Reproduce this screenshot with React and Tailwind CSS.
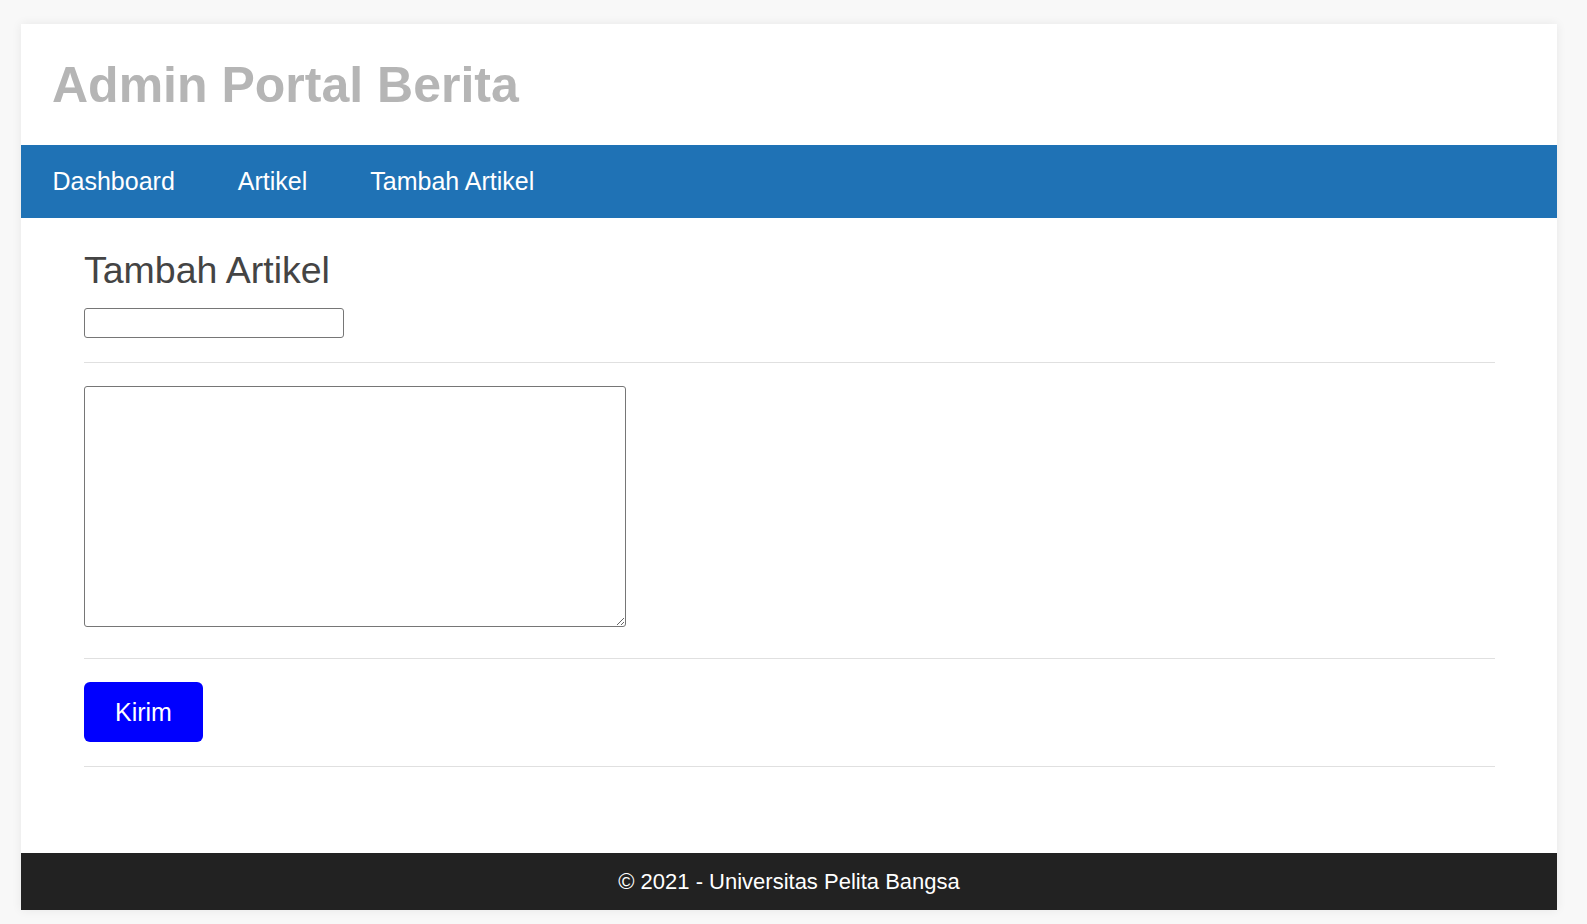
const App = () => {
  const links = ['Dashboard', 'Artikel', 'Tambah Artikel']

  return (
    <div className="min-h-screen bg-[#f8f8f8] pt-[24px] font-['Liberation_Sans',Arial,sans-serif]">
      <div className="ml-[21px] w-[1536px] bg-white shadow-[0_0_10px_rgba(0,0,0,0.07)]">
        <header className="h-[121px] pt-[33px] px-[31px]">
          <h1 className="text-[50px] leading-[57px] font-bold text-[#b5b5b5]">
            Admin Portal Berita
          </h1>
        </header>
        <nav className="h-[73px] flex items-center bg-[#1f72b5]">
          {links.map((item) => (
            <a key={item} href="#" className="px-[31.5px] text-[25px] text-white">
              {item}
            </a>
          ))}
        </nav>
        <main className="pt-[32px] pb-[86px] pl-[63px] pr-[62px]">
          <h2 className="text-[37.5px] leading-[41px] font-normal text-[#444]">
            Tambah Artikel
          </h2>
          <input
            type="text"
            className="mt-[17px] block w-[260px] h-[30px] border border-[#767676] rounded-[3px] bg-white"
          />
          <hr className="mt-[24px] border-0 h-px bg-[#e0e0e0]" />
          <textarea className="mt-[23px] block w-[542px] h-[241px] border border-[#767676] rounded-[3px] bg-white" />
          <hr className="mt-[31px] border-0 h-px bg-[#e0e0e0]" />
          <button className="mt-[23px] block px-[31px] py-[16px] bg-[#0000ff] rounded-[6px] text-[25px] leading-[28px] text-white">
            Kirim
          </button>
          <hr className="mt-[24px] border-0 h-px bg-[#e0e0e0]" />
        </main>
        <footer className="h-[57px] flex items-center justify-center bg-[#222]">
          <p className="text-[22px] text-white">&copy; 2021 - Universitas Pelita Bangsa</p>
        </footer>
      </div>
    </div>
  )
}

export default App
